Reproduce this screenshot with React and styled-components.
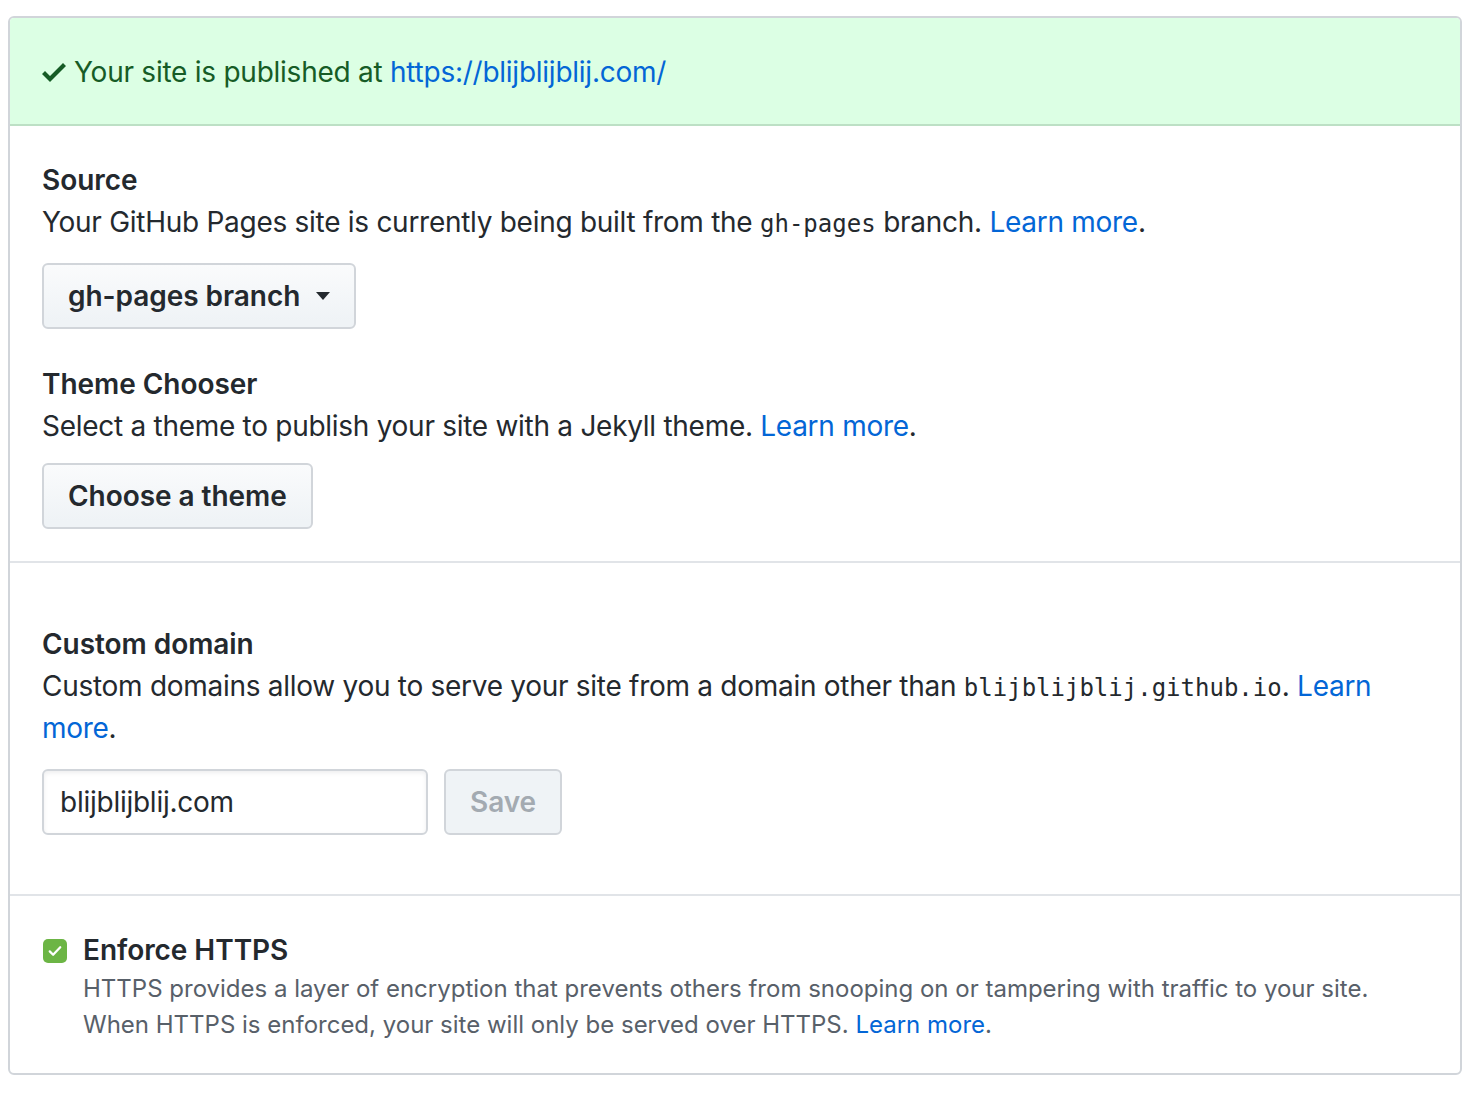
import styled, { createGlobalStyle } from "styled-components";

const GlobalStyle = createGlobalStyle`
  body {
    margin: 0;
    padding: 16px 18px 0 8px;
    background: #fff;
    font-family: Inter, "Noto Sans", sans-serif;
    color: #24292e;
  }
`;

export default function App() {
  return (
    <>
      <GlobalStyle />
      <Box>
        <Flash>
          <CheckIcon viewBox="0 0 12 16">
            <path d="M12 5l-8 8-4-4 1.5-1.5L4 10l6.5-6.5L12 5z" />
          </CheckIcon>
          Your site is published at <Link>https://blijblijblij.com/</Link>
        </Flash>

        <Row $pad={33}>
          <Heading>Source</Heading>
          <Text>
            Your GitHub Pages site is currently being built from the <Code>gh-pages</Code> branch.{" "}
            <Link>Learn more</Link>.
          </Text>
          <Button $top={20}>
            gh-pages branch
            <Caret viewBox="0 0 14 8">
              <path d="M0 0h14L7 8z" />
            </Caret>
          </Button>
          <Heading $top={34}>Theme Chooser</Heading>
          <Text>
            Select a theme to publish your site with a Jekyll theme. <Link>Learn more</Link>.
          </Text>
          <Button $top={16}>Choose a theme</Button>
        </Row>

        <Row $pad={60} $bottom={59}>
          <Heading>Custom domain</Heading>
          <Text>
            Custom domains allow you to serve your site from a domain other than{" "}
            <Code>blijblijblij.github.io</Code>. <Link>Learn more</Link>.
          </Text>
          <DomainForm>
            <Input defaultValue="blijblijblij.com" />
            <Button disabled>Save</Button>
          </DomainForm>
        </Row>

        <Row $pad={33} $bottom={30} $last>
          <CheckRow>
            <Checkbox>
              <svg viewBox="0 0 24 24" width="18" height="18">
                <path d="M5 12.5l4.5 4.5L19 7" fill="none" stroke="#fff" strokeWidth="3" strokeLinecap="round" strokeLinejoin="round" />
              </svg>
            </Checkbox>
            <div>
              <Heading>Enforce HTTPS</Heading>
              <Note>
                HTTPS provides a layer of encryption that prevents others from snooping on or tampering with traffic to your site.
                <br />
                When HTTPS is enforced, your site will only be served over HTTPS. <Link>Learn more</Link>.
              </Note>
            </div>
          </CheckRow>
        </Row>
      </Box>
    </>
  );
}

const Box = styled.div`
  width: 1454px;
  border: 2px solid #d1d5da;
  border-radius: 6px;
  overflow: hidden;
  box-sizing: border-box;
  background: #fff;
`;

const Flash = styled.div`
  display: flex;
  align-items: center;
  background: #dcffe4;
  border-bottom: 2px solid #bde0c5;
  color: #165c26;
  font-size: 28px;
  line-height: 42px;
  letter-spacing: -0.25px;
  padding: 33px 32px 31px;
  white-space: pre;
`;

const CheckIcon = styled.svg`
  width: 24px;
  height: 32px;
  fill: #165c26;
  margin-right: 8px;
`;

const Link = styled.a`
  color: #0366d6;
  text-decoration: none;
  cursor: pointer;
`;

const Row = styled.div`
  padding: ${(p) => p.$pad || 32}px 32px ${(p) => p.$bottom || 32}px;
  border-bottom: ${(p) => (p.$last ? "none" : "2px solid #e1e4e8")};
`;

const Heading = styled.div`
  font-size: 28px;
  line-height: 42px;
  font-weight: 600;
  letter-spacing: -0.05px;
  color: #24292e;
  margin-top: ${(p) => p.$top || 0}px;
`;

const Text = styled.div`
  font-size: 28px;
  line-height: 42px;
  letter-spacing: -0.28px;
  color: #24292e;
  max-width: 1340px;
`;

const Code = styled.code`
  font-family: "DejaVu Sans Mono", "Liberation Mono", monospace;
  font-size: 24px;
  line-height: 1;
  letter-spacing: 0;
`;

const Button = styled.button`
  display: inline-flex;
  align-items: center;
  gap: 16px;
  height: 66px;
  padding: 0 24px;
  margin-top: ${(p) => p.$top || 0}px;
  font-family: Inter, "Noto Sans", sans-serif;
  font-size: 28px;
  font-weight: 600;
  letter-spacing: -0.05px;
  color: #24292e;
  background: linear-gradient(#fafbfc, #eff3f6 90%);
  border: 2px solid #d1d5da;
  border-radius: 6px;
  cursor: pointer;

  &:disabled {
    color: #a3aab1;
    background: #eff3f6;
    cursor: default;
  }
`;

const Caret = styled.svg`
  width: 14px;
  height: 8px;
  fill: #24292e;
`;

const DomainForm = styled.div`
  display: flex;
  gap: 16px;
  margin-top: 20px;
`;

const Input = styled.input`
  width: 386px;
  height: 66px;
  box-sizing: border-box;
  padding: 0 16px;
  font-family: Inter, "Noto Sans", sans-serif;
  font-size: 28px;
  letter-spacing: -0.25px;
  color: #24292e;
  border: 2px solid #d1d5da;
  border-radius: 6px;
  box-shadow: inset 0 2px 4px rgba(27, 31, 35, 0.075);
  outline: none;
`;

const CheckRow = styled.div`
  display: flex;
  align-items: flex-start;
  gap: 16px;
`;

const Checkbox = styled.span`
  display: flex;
  align-items: center;
  justify-content: center;
  width: 24px;
  height: 24px;
  margin-top: 10px;
  margin-left: 1px;
  border-radius: 5px;
  background: #6cb545;
  flex-shrink: 0;
`;

const Note = styled.div`
  font-size: 24px;
  line-height: 36px;
  color: #586069;
`;
